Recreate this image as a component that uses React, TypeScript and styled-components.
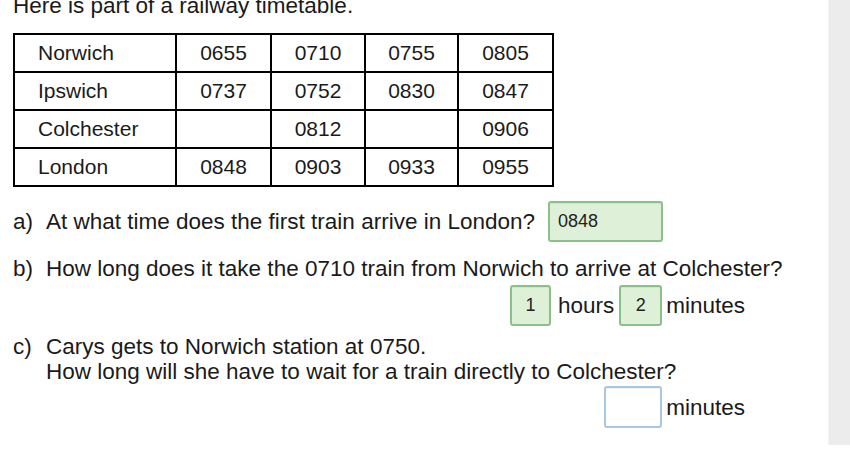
import styled, { createGlobalStyle } from 'styled-components';

const GlobalStyle = createGlobalStyle`
  html, body {
    margin: 0;
    padding: 0;
    background: #ffffff;
    overflow: hidden;
  }
  body {
    font-family: 'Liberation Sans', Arial, sans-serif;
    color: #111111;
  }
`;

type Stop = {
  station: string;
  times: string[];
};

const timetable: Stop[] = [
  { station: 'Norwich', times: ['0655', '0710', '0755', '0805'] },
  { station: 'Ipswich', times: ['0737', '0752', '0830', '0847'] },
  { station: 'Colchester', times: ['', '0812', '', '0906'] },
  { station: 'London', times: ['0848', '0903', '0933', '0955'] },
];

const colWidths = [162, 95, 94, 93, 95];

const App = () => {
  return (
    <>
      <GlobalStyle />
      <Page>
        <Main>
          <Intro>Here is part of a railway timetable.</Intro>

          <Timetable>
            <colgroup>
              {colWidths.map((w, i) => (
                <col key={i} style={{ width: w }} />
              ))}
            </colgroup>
            <tbody>
              {timetable.map((stop) => (
                <tr key={stop.station}>
                  <StationCell>{stop.station}</StationCell>
                  {stop.times.map((t, i) => (
                    <TimeCell key={i}>{t}</TimeCell>
                  ))}
                </tr>
              ))}
            </tbody>
          </Timetable>

          <Question $top={14} $center>
            <Label>a)</Label>
            <InlineRow>
              <span>At what time does the first train arrive in London?</span>
              <AnswerBox $state="correct" $width={115} $align="left">
                0848
              </AnswerBox>
            </InlineRow>
          </Question>

          <Question $top={14}>
            <Label>b)</Label>
            <QuestionText>
              How long does it take the 0710 train from Norwich to arrive at Colchester?
            </QuestionText>
          </Question>
          <AnswerRow $top={4}>
            <AnswerBox $state="correct" $width={41}>
              1
            </AnswerBox>
            <Unit $gap={7}>hours</Unit>
            <AnswerBox $state="correct" $width={43}>
              2
            </AnswerBox>
            <Unit>minutes</Unit>
          </AnswerRow>

          <Question $top={8}>
            <Label>c)</Label>
            <QuestionText>
              Carys gets to Norwich station at 0750.
              <br />
              How long will she have to wait for a train directly to Colchester?
            </QuestionText>
          </Question>
          <AnswerRow $top={2}>
            <AnswerBox $state="empty" $width={58} $height={42} />
            <Unit>minutes</Unit>
          </AnswerRow>
        </Main>
        <SidePanel />
      </Page>
    </>
  );
};

export default App;

const Page = styled.div`
  display: flex;
  width: 850px;
  height: 460px;
`;

const Main = styled.div`
  flex: 1;
  padding-left: 13px;
`;

const SidePanel = styled.div`
  width: 21px;
  height: 445px;
  background: #ececec;
  border-left: 1px solid #f3f3f3;
`;

const Intro = styled.div`
  font-size: 22.5px;
  line-height: 24px;
  margin-top: -6px;
  color: #1a1a1a;
`;

const Timetable = styled.table`
  margin-top: 15px;
  border-collapse: collapse;
  table-layout: fixed;
  width: 539px;
  border: 2px solid #000;
  font-size: 21px;
  color: #1a1a1a;
`;

const StationCell = styled.td`
  border: 2px solid #000;
  height: 36px;
  padding: 0 0 0 23px;
  text-align: left;
`;

const TimeCell = styled.td`
  border: 2px solid #000;
  height: 36px;
  padding: 0;
  text-align: center;
`;

const Question = styled.div<{ $top: number; $center?: boolean }>`
  display: grid;
  grid-template-columns: 33px 1fr;
  align-items: ${(p) => (p.$center ? 'center' : 'start')};
  margin-top: ${(p) => p.$top}px;
  font-size: 22.5px;
  line-height: 25px;
  color: #1a1a1a;
`;

const Label = styled.span``;

const InlineRow = styled.div`
  display: flex;
  align-items: center;
  gap: 13px;
`;

const QuestionText = styled.div``;

const AnswerRow = styled.div<{ $top: number }>`
  display: flex;
  justify-content: flex-end;
  align-items: center;
  gap: 4px;
  width: 732px;
  margin-top: ${(p) => p.$top}px;
  font-size: 22.5px;
  color: #1a1a1a;
`;

const Unit = styled.span<{ $gap?: number }>`
  line-height: 25px;
  margin: 0 ${(p) => (p.$gap ? p.$gap - 6 : 0)}px 0 ${(p) => (p.$gap ? p.$gap - 4 : 0)}px;
`;

const AnswerBox = styled.div<{
  $state: 'correct' | 'empty';
  $width: number;
  $height?: number;
  $align?: 'left' | 'center';
}>`
  box-sizing: border-box;
  display: flex;
  align-items: center;
  justify-content: ${(p) => (p.$align === 'left' ? 'flex-start' : 'center')};
  width: ${(p) => p.$width}px;
  height: ${(p) => p.$height ?? 41}px;
  padding: 0 8px;
  border-radius: 3px;
  font-size: 18px;
  color: #222;
  background: ${(p) => (p.$state === 'correct' ? '#dff0d8' : '#ffffff')};
  border: 2px solid ${(p) => (p.$state === 'correct' ? '#88c288' : '#a8c8e0')};
  box-shadow: inset 0 1px 1px rgba(0, 0, 0, 0.06);
`;
